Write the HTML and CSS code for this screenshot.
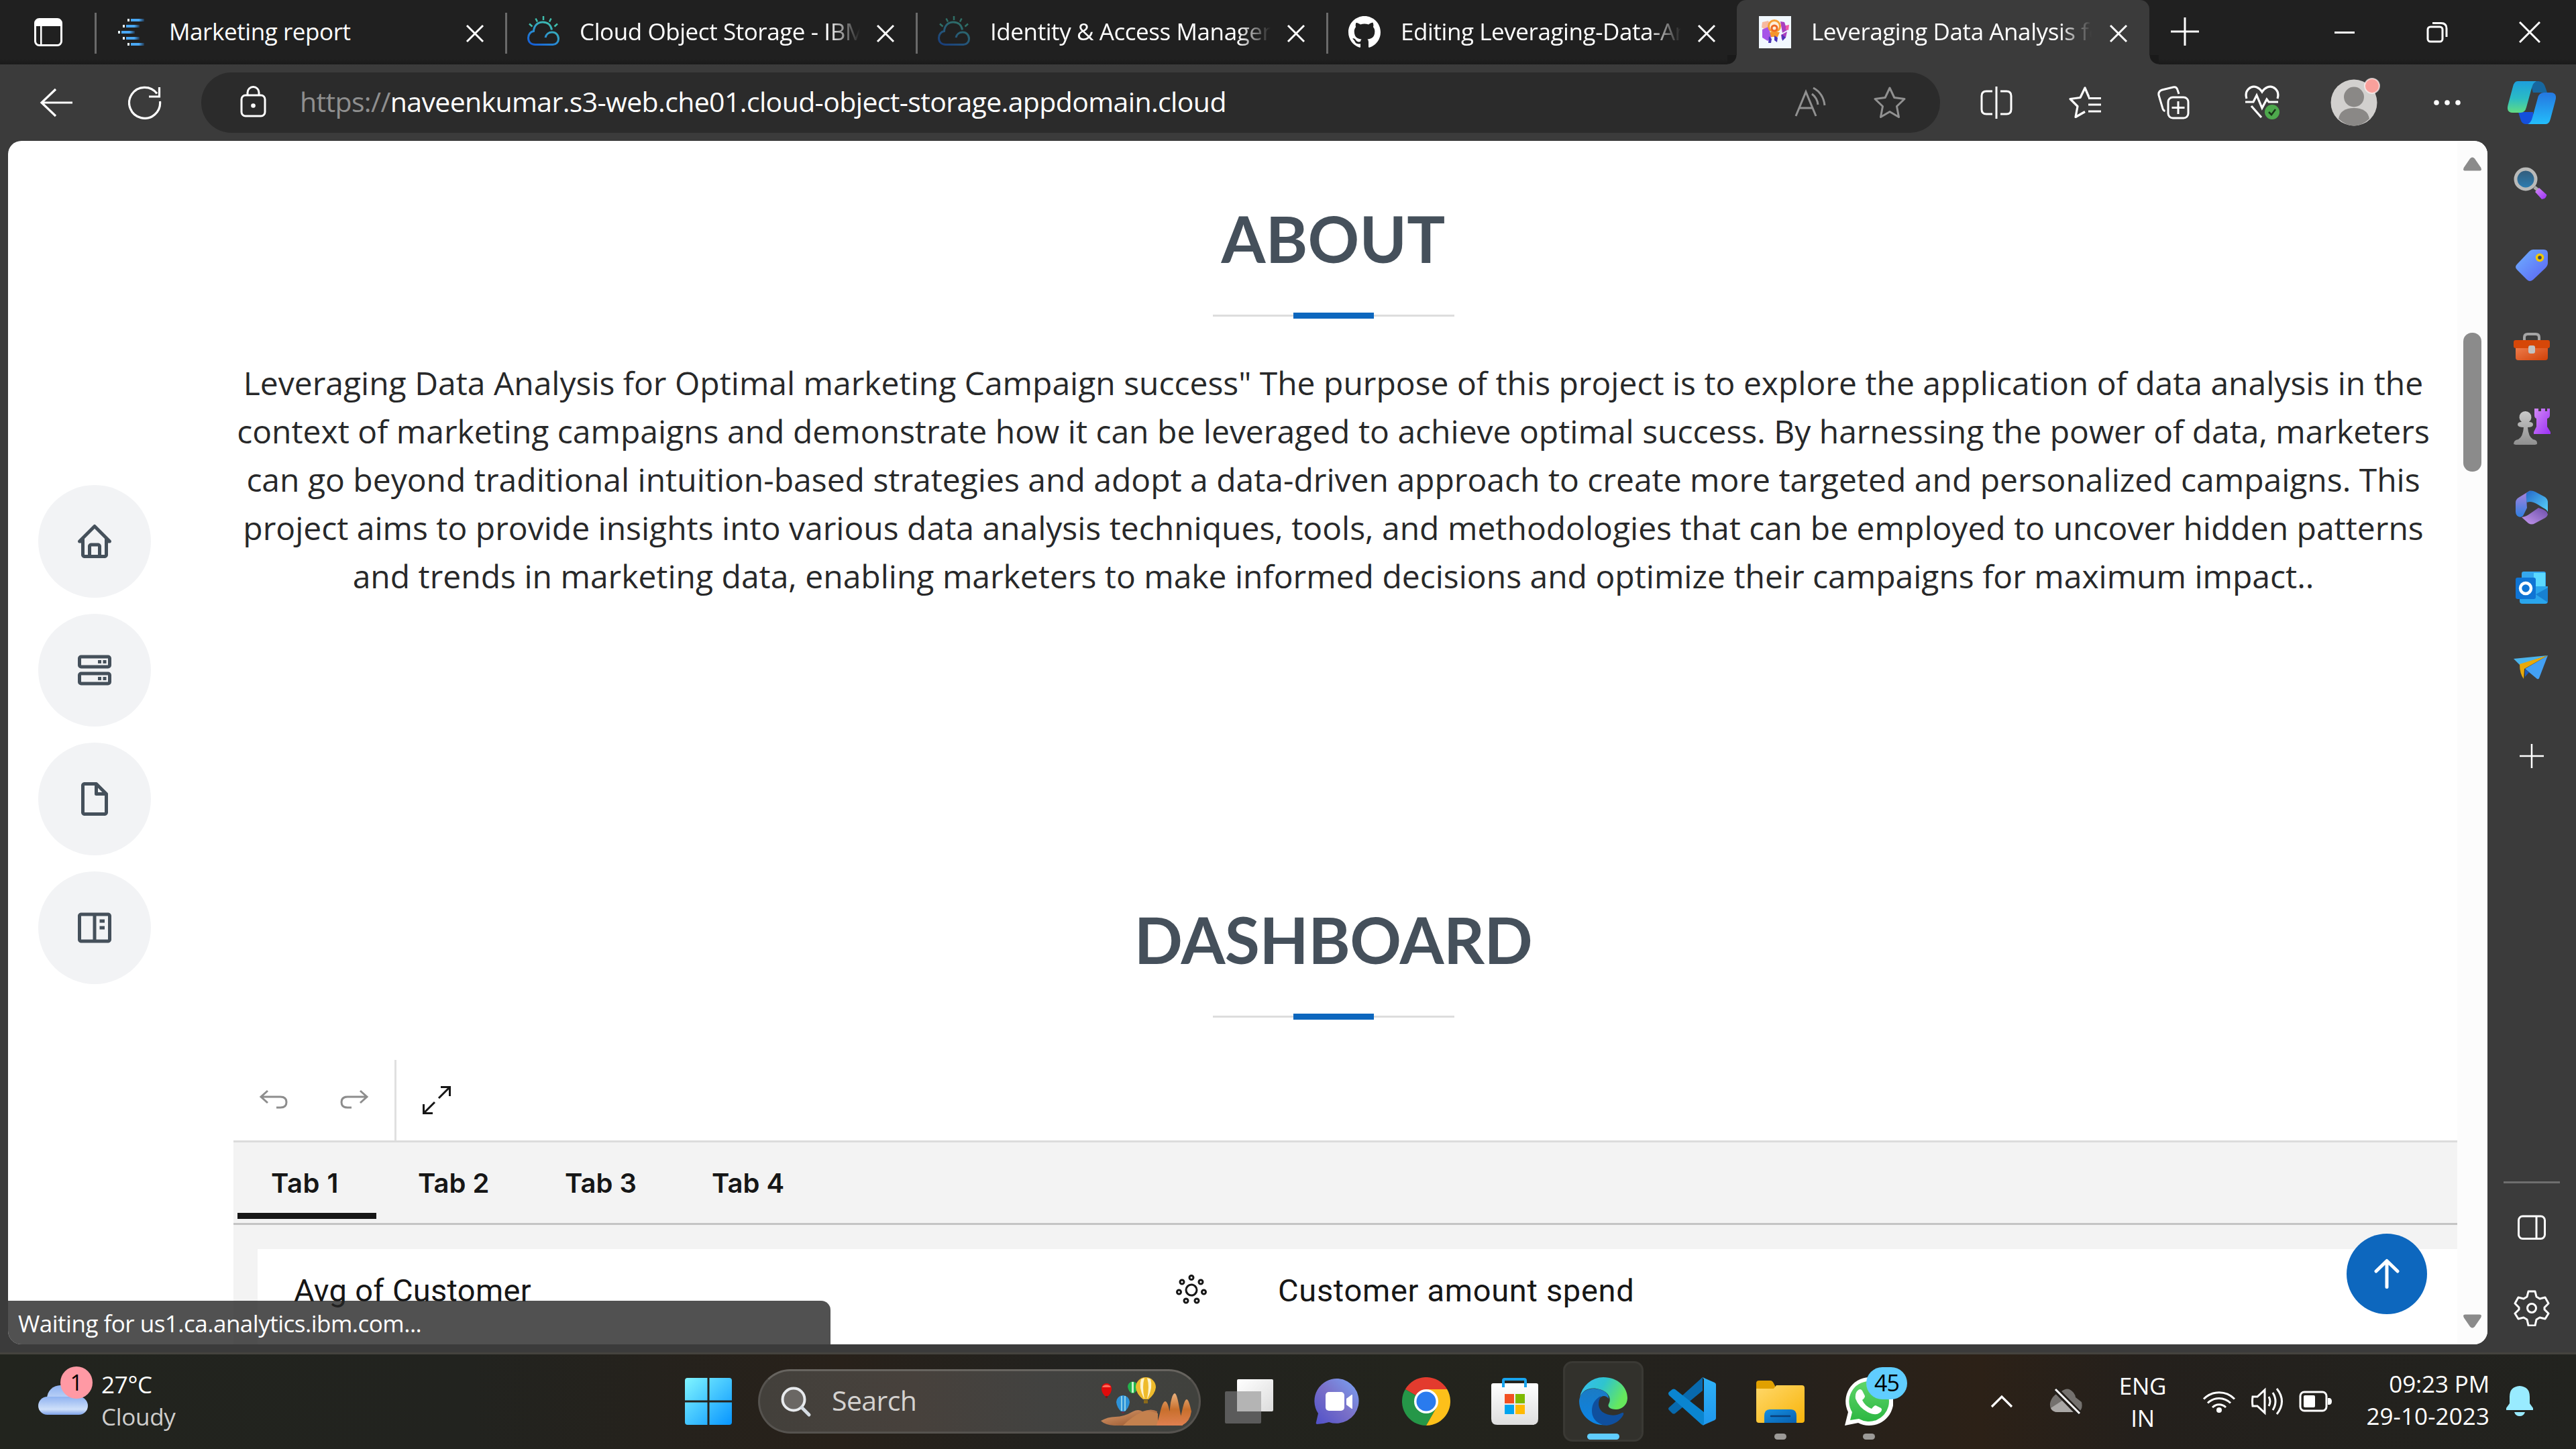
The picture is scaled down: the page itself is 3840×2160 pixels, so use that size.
FILE: index.html
```html
<!DOCTYPE html>
<html lang="en">
<head>
<meta charset="utf-8">
<title>Leveraging Data Analysis for Optimal Marketing Campaign</title>
<link rel="stylesheet" href="styles.css">
</head>
<body>
<svg class="defs" width="0" height="0" aria-hidden="true">
  <defs>
    <linearGradient id="gBar" x1="0" y1="0" x2="1" y2="0"><stop offset="0" stop-color="#4aa8f5"/><stop offset=".6" stop-color="#4aa8f5"/><stop offset="1" stop-color="#20344a"/></linearGradient>
    <linearGradient id="gCloud" x1="0" y1="1" x2=".7" y2="0"><stop offset="0" stop-color="#1258d8"/><stop offset=".5" stop-color="#2b8fd0"/><stop offset="1" stop-color="#3fbfae"/></linearGradient>
    <linearGradient id="gCopA" x1="0" y1="0" x2="0" y2="1"><stop offset="0" stop-color="#1d9fdd"/><stop offset=".55" stop-color="#2bbcc4"/><stop offset="1" stop-color="#61dc83"/></linearGradient>
    <linearGradient id="gCopB" x1="0" y1="0" x2="0" y2="1"><stop offset="0" stop-color="#2577e0"/><stop offset="1" stop-color="#23bdfb"/></linearGradient>
    <linearGradient id="gPurple" x1="0" y1="0" x2="1" y2="1"><stop offset="0" stop-color="#d38bf5"/><stop offset="1" stop-color="#9b30f5"/></linearGradient>
    <linearGradient id="gTag" x1="0" y1="0" x2="1" y2="1"><stop offset="0" stop-color="#6fb2ff"/><stop offset="1" stop-color="#5a62f4"/></linearGradient>
    <linearGradient id="gLens" x1="0" y1="0" x2="0" y2="1"><stop offset="0" stop-color="#335a78"/><stop offset="1" stop-color="#2c7fb4"/></linearGradient>
    <linearGradient id="gGrey" x1="0" y1="0" x2="0" y2="1"><stop offset="0" stop-color="#c9c9c9"/><stop offset="1" stop-color="#8f8f8f"/></linearGradient>
    <linearGradient id="gBox" x1="0" y1="0" x2="1" y2="1"><stop offset="0" stop-color="#f08050"/><stop offset="1" stop-color="#d04108"/></linearGradient>
    <linearGradient id="gM1" x1="0" y1="0" x2="0" y2="1"><stop offset="0" stop-color="#b182dc"/><stop offset="1" stop-color="#2f7fe0"/></linearGradient>
    <linearGradient id="gM2" x1="0" y1="0" x2="1" y2="1"><stop offset="0" stop-color="#2468c8"/><stop offset="1" stop-color="#58d3fb"/></linearGradient>
    <linearGradient id="gM3" x1="0" y1="1" x2="1" y2="0"><stop offset="0" stop-color="#c79af0"/><stop offset="1" stop-color="#6a4da8"/></linearGradient>
    <linearGradient id="gWin" x1="0" y1="0" x2="1" y2="1"><stop offset="0" stop-color="#80f5ff"/><stop offset="1" stop-color="#0795ff"/></linearGradient>
    <linearGradient id="gWeather" x1="0" y1="0" x2="0" y2="1"><stop offset="0" stop-color="#8fb2f0"/><stop offset=".7" stop-color="#cfe0fa"/><stop offset="1" stop-color="#7ca0e8"/></linearGradient>
    <linearGradient id="gTask" x1="0" y1="0" x2="1" y2="1"><stop offset="0" stop-color="#ffffff"/><stop offset="1" stop-color="#dcdcdc"/></linearGradient>
    <linearGradient id="gChat" x1="1" y1="0" x2="0" y2="1"><stop offset="0" stop-color="#79a4f5"/><stop offset=".5" stop-color="#7a70c8"/><stop offset="1" stop-color="#4f50c9"/></linearGradient>
    <linearGradient id="gStore" x1="0" y1="0" x2="0" y2="1"><stop offset="0" stop-color="#ffffff"/><stop offset="1" stop-color="#dedede"/></linearGradient>
    <linearGradient id="gEdgeTop" x1="0" y1="0" x2="1" y2=".4"><stop offset="0" stop-color="#36bdf2"/><stop offset=".5" stop-color="#2fc4cf"/><stop offset="1" stop-color="#66e85c"/></linearGradient>
    <linearGradient id="gEdgeLeft" x1="0" y1="0" x2="0" y2="1"><stop offset="0" stop-color="#1b7bc4"/><stop offset="1" stop-color="#0b84e6"/></linearGradient>
    <linearGradient id="gCode" x1="0" y1="0" x2="0" y2="1"><stop offset="0" stop-color="#2fb2f7"/><stop offset="1" stop-color="#1e97ee"/></linearGradient>
    <linearGradient id="gFolder" x1="0" y1="0" x2="1" y2="1"><stop offset="0" stop-color="#ffd86a"/><stop offset="1" stop-color="#f8b40a"/></linearGradient>
    <linearGradient id="gFolderBlue" x1="0" y1="0" x2="1" y2="1"><stop offset="0" stop-color="#1690e0"/><stop offset="1" stop-color="#075fb0"/></linearGradient>
    <linearGradient id="gWa" x1="0" y1="0" x2="0" y2="1"><stop offset="0" stop-color="#60d66a"/><stop offset="1" stop-color="#2cb742"/></linearGradient>
    <linearGradient id="gRock" x1="0" y1="0" x2="0" y2="1"><stop offset="0" stop-color="#eab27e"/><stop offset=".5" stop-color="#c86f2c"/><stop offset="1" stop-color="#e08050"/></linearGradient>
    <linearGradient id="gSand" x1="0" y1="0" x2="1" y2="1"><stop offset="0" stop-color="#e0a070"/><stop offset="1" stop-color="#8a4a24"/></linearGradient>
    <symbol id="x" viewBox="0 0 30 30"><path d="M3 3 27 27M27 3 3 27" fill="none" stroke="#fff" stroke-width="3"/></symbol>
    <symbol id="cos" viewBox="0 0 48 48">
      <path d="M12 42.500C5 42.500 1.500 38 1.500 32.500c0-6 4-9.500 8-10C10 13.500 16 9 23 9c8 0 12.500 5 13.500 11.500M12 42.500h26c5 0 8.500-4 8.500-8.500 0-6-4-10-9.500-10-5 0-9 3-10 8" fill="none" stroke="url(#gCloud)" stroke-width="3"/>
      <path d="M24 0v6M12.500 3.500l2.500 5M35.500 3.500l-2.500 5M3 11.500l4.500 4M45 11.500l-4.500 4" stroke="#3fbfae" stroke-width="2.500"/>
    </symbol>
  </defs>
</svg>

<div class="browser">
  <header class="tabstrip">
    <div class="workspace"><svg width="42" height="42" viewBox="0 0 42 42"><rect x="1.500" y="1.500" width="39" height="39" rx="6" fill="none" stroke="#fff" stroke-width="3"/><path d="M2 7q0-6 6-6h26q6 0 6 6v5H2zM9 12h2.500v28H9z" fill="#fff"/></svg></div>
    <div class="tab">
      <svg class="fav" width="48" height="48" viewBox="0 0 48 48"><g fill="url(#gBar)"><rect x="21" y="4" width="20" height="4"/><rect x="14" y="13" width="20" height="4"/><rect x="7" y="22" width="20" height="4"/><rect x="14" y="31" width="20" height="4"/><rect x="21" y="40" width="20" height="4"/></g><path d="M16 4h3v4h-3zM9 13h3v4H9zM2 22h3v4H2zM9 31h3v4H9zM16 40h3v4h-3z" fill="#e8f4fa"/></svg>
      <span class="label">Marketing report</span><svg class="close" width="30" height="30"><use href="#x"/></svg>
    </div>
    <div class="tab">
      <svg class="fav" width="48" height="48"><use href="#cos"/></svg>
      <span class="label fade">Cloud Object Storage - IBM Cloud</span><svg class="close" width="30" height="30"><use href="#x"/></svg>
    </div>
    <div class="tab">
      <svg class="fav dim" width="48" height="48"><use href="#cos"/></svg>
      <span class="label fade">Identity &amp; Access Management</span><svg class="close" width="30" height="30"><use href="#x"/></svg>
    </div>
    <div class="tab">
      <svg class="fav" width="48" height="48" viewBox="0 0 16 16"><path fill="#fff" d="M8 0C3.580 0 0 3.580 0 8c0 3.540 2.290 6.530 5.470 7.590.4.070.55-.17.55-.38 0-.19-.01-.82-.01-1.490-2.010.37-2.530-.49-2.690-.94-.09-.23-.48-.94-.82-1.130-.28-.15-.68-.52-.01-.53.63-.01 1.080.58 1.230.82.72 1.210 1.870.87 2.330.66.07-.52.28-.87.51-1.070-1.780-.2-3.640-.89-3.640-3.950 0-.87.31-1.590.82-2.150-.08-.2-.36-1.020.08-2.120 0 0 .67-.21 2.200.82.64-.18 1.320-.27 2-.27s1.360.09 2 .27c1.530-1.040 2.200-.82 2.200-.82.44 1.100.16 1.920.08 2.120.51.56.82 1.270.82 2.150 0 3.070-1.870 3.750-3.650 3.950.29.25.54.73.54 1.480 0 1.070-.01 1.930-.01 2.200 0 .21.15.46.55.38A8.010 8.010 0 0 0 16 8c0-4.420-3.580-8-8-8z"/></svg>
      <span class="label fade">Editing Leveraging-Data-Analysis</span><svg class="close" width="30" height="30"><use href="#x"/></svg>
    </div>
    <div class="tab active">
      <svg class="fav" width="48" height="48" viewBox="0 0 48 48"><rect width="48" height="48" fill="#f1f8fe"/><path d="M5 9l9-2 4 8-6 6-8-4z" fill="#f7b9a0"/><path d="M5 20l9-4 5 15-6 6-8-5z" fill="#a653e8"/><path d="M32 8l6 1 4 12-7 4zM33 28l9-5-2 9-6 3z" fill="#a93fc0"/><path d="M40 14l5-1-1 8-4-1z" fill="#ee5aa8"/><circle cx="23" cy="15" r="8.500" fill="#fdeed8" stroke="#f5a034" stroke-width="3"/><circle cx="23" cy="18" r="4" fill="none" stroke="#ee6a24" stroke-width="3"/><path d="M16 24l15 0-3 7H18z" fill="#f5952b"/><path d="M15 30l4 4-1 6h-4zM23 29l5 3-1 7-4-3zM34 27l6 5-5 5z" fill="#4a35b8"/></svg>
      <span class="label fade">Leveraging Data Analysis for Optimal</span><svg class="close" width="30" height="30"><use href="#x"/></svg>
    </div>
    <svg class="newtab" width="42" height="42" viewBox="0 0 42 42"><path d="M21 0v42M0 21h42" stroke="#fff" stroke-width="3"/></svg>
    <div class="winbtns">
      <svg width="32" height="32" viewBox="0 0 32 32"><path d="M1 16.500h30" stroke="#fff" stroke-width="3"/></svg>
      <svg width="32" height="32" viewBox="0 0 32 32"><g fill="none" stroke="#fff" stroke-width="3"><rect x="2" y="8" width="22" height="22" rx="4"/><path d="M9 2.500h13q8 0 8 8V23"/></g></svg>
      <svg width="32" height="32" viewBox="0 0 32 32"><path d="M1 1 31 31M31 1 1 31" stroke="#fff" stroke-width="3"/></svg>
    </div>
  </header>

  <div class="toolbar">
    <div class="navbtns">
      <svg width="50" height="48" viewBox="0 0 50 48"><path d="M24 4 3 24 24 44M3 24H49" fill="none" stroke="#fff" stroke-width="3.200"/></svg>
      <svg width="50" height="50" viewBox="0 0 50 50"><path d="M47.500 23A23 23 0 1 1 43 11.500M46.500 2v14H31" fill="none" stroke="#fff" stroke-width="3.200"/></svg>
    </div>
    <div class="address">
      <svg class="lock" width="40" height="48" viewBox="0 0 40 48"><rect x="2" y="14" width="35" height="31" rx="6" fill="none" stroke="#fff" stroke-width="3"/><path d="M11 14v-4a8.500 8.500 0 0 1 17 0v4" fill="none" stroke="#fff" stroke-width="3"/><circle cx="19.500" cy="29.500" r="3.300" fill="#fff"/></svg>
      <span class="url"><i>https://</i>naveenkumar.s3-web.che01.cloud-object-storage.appdomain.cloud</span>
      <svg class="read" width="48" height="48" viewBox="0 0 48 48"><g fill="none" stroke="#919191" stroke-width="3"><path d="M2 44 17 8 32 44M7 32h20M26 11q8 6 9 16M28 2q15 8 17 26"/></g></svg>
      <svg width="50" height="50" viewBox="0 0 50 50"><path d="M25 3l6.800 14.500L47 19.500 35.500 30.500l3 16L25 38.500l-13.500 8 3-16L3 19.500l15.200-2z" fill="none" stroke="#919191" stroke-width="3" stroke-linejoin="round"/></svg>
    </div>
    <div class="tools">
      <svg width="48" height="50" viewBox="0 0 48 50"><g fill="none" stroke="#fff" stroke-width="3"><path d="M18 8H9q-7 0-7 7v20q0 7 7 7h9M30 8h9q7 0 7 7v20q0 7-7 7h-9M24 1v48"/></g></svg>
      <svg width="50" height="50" viewBox="0 0 50 50"><path d="M31 17 25 3l-7 14.500L3 19.500l11 11-3 16L25 38.500M30 18.500h19M30 28h19M30 38h19" fill="none" stroke="#fff" stroke-width="3.200" stroke-linejoin="round"/></svg>
      <svg width="50" height="50" viewBox="0 0 50 50"><g fill="none" stroke="#fff" stroke-width="3"><rect x="17" y="17" width="30" height="31" rx="7"/><path d="M32 23v19M22.500 32.500h19M33 12l-2-6q-1.500-5-6.500-4L8 6Q2 8 3 14l6 20q1 3 3.500 3.500"/></g></svg>
      <svg width="54" height="54" viewBox="0 0 54 54"><path d="M4 21C0 8 11 1 19 4q5 2 8 7 3-5 8-7c8-3 19 4 15 17M2 26h12l5-10 8 19 7-13 3 4h14M11 32l15 17" fill="none" stroke="#fff" stroke-width="3.200"/><circle cx="42" cy="41" r="11" fill="#4ea94d"/><path d="M37 41l4 4 6-8" fill="none" stroke="#183518" stroke-width="2.500"/></svg>
      <svg class="avatar" width="78" height="78" viewBox="0 0 78 78"><circle cx="38" cy="42" r="34.500" fill="#d2d0ce"/><circle cx="38" cy="33.500" r="15" fill="#8a8886"/><path d="M15 66c2-11 10-16 23-16s21 5 23 16q-10 10-23 10.500Q25 76 15 66z" fill="#8a8886"/><circle cx="65" cy="17" r="11" fill="#f9a09b" stroke="#fff" stroke-opacity=".6" stroke-width="2"/></svg>
      <svg width="42" height="10" viewBox="0 0 42 10"><g fill="#fff"><circle cx="5" cy="5" r="3.800"/><circle cx="21" cy="5" r="3.800"/><circle cx="37" cy="5" r="3.800"/></g></svg>
      <svg class="copilot" width="72" height="66" viewBox="0 0 72 66"><path d="M33 1h13q8 0 11 11l2 6H38z" fill="#17679f"/><path d="M39 65H27q-6 0-8-8l-3-10h22z" fill="#1450dc"/><path d="M15 1h28q-5 2-7 10L28 40q-2 8-9 8H8q-11 0-7-13L8 9q2-8 7-8z" fill="url(#gCopA)"/><path d="M57 65H30q5-2 7-10l8-29q2-8 9-8h10q11 0 7 13l-7 26q-2 8-7 8z" fill="url(#gCopB)"/></svg>
    </div>
  </div>

  <div class="workarea">
    <div class="viewport">
      <nav class="sidenav">
        <a><svg width="60" height="60" viewBox="0 0 24 24"><path d="M3 13h1v7c0 1.103.897 2 2 2h12c1.103 0 2-.897 2-2v-7h1a1 1 0 0 0 .707-1.707l-9-9a.999.999 0 0 0-1.414 0l-9 9A1 1 0 0 0 3 13zm7 7v-5h4v5h-4zm2-15.586 6 6V15l.001 5H16v-5c0-1.103-.897-2-2-2h-4c-1.103 0-2 .897-2 2v5H6v-9.586l6-6z"/></svg></a>
        <a><svg width="60" height="60" viewBox="0 0 24 24"><path d="M20 3H4a2 2 0 0 0-2 2v4a2 2 0 0 0 2 2h16a2 2 0 0 0 2-2V5a2 2 0 0 0-2-2zM4 9V5h16v4zM20 13H4a2 2 0 0 0-2 2v4a2 2 0 0 0 2 2h16a2 2 0 0 0 2-2v-4a2 2 0 0 0-2-2zM4 19v-4h16v4zM17 6h2v2h-2zM14 6h2v2h-2zM17 16h2v2h-2zM14 16h2v2h-2z" fill-rule="evenodd"/></svg></a>
        <a><svg width="60" height="60" viewBox="0 0 24 24"><path d="M19.937 8.680c-.011-.032-.02-.063-.033-.094a.997.997 0 0 0-.196-.293l-6-6a.997.997 0 0 0-.293-.196c-.03-.014-.062-.022-.094-.033a.991.991 0 0 0-.259-.051C13.040 2.011 13.021 2 13 2H6c-1.103 0-2 .897-2 2v16c0 1.103.897 2 2 2h12c1.103 0 2-.897 2-2V9c0-.021-.011-.040-.013-.062a.990.990 0 0 0-.050-.258zM16.586 8H14V5.414L16.586 8zM6 20V4h6v5a1 1 0 0 0 1 1h5l.002 10H6z"/></svg></a>
        <a><svg width="60" height="60" viewBox="0 0 24 24"><path d="M20 3H4c-1.103 0-2 .897-2 2v14c0 1.103.897 2 2 2h16c1.103 0 2-.897 2-2V5c0-1.103-.897-2-2-2zM4 19V5h7v14H4zm9 0V5h7l.001 14H13z"/><path d="M15 7h3v2h-3zM15 11h3v2h-3z"/></svg></a>
      </nav>
      <main class="page">
        <section class="about">
          <h2>ABOUT</h2>
          <div class="rule"><span></span></div>
          <p>Leveraging Data Analysis for Optimal marketing Campaign success" The purpose of this project is to explore the application of data analysis in the context of marketing campaigns and demonstrate how it can be leveraged to achieve optimal success. By harnessing the power of data, marketers can go beyond traditional intuition-based strategies and adopt a data-driven approach to create more targeted and personalized campaigns. This project aims to provide insights into various data analysis techniques, tools, and methodologies that can be employed to uncover hidden patterns and trends in marketing data, enabling marketers to make informed decisions and optimize their campaigns for maximum impact..</p>
        </section>
        <section class="dash">
          <h2>DASHBOARD</h2>
          <div class="rule"><span></span></div>
          <div class="embed">
            <div class="actions">
              <div class="history">
                <svg width="48" height="48" viewBox="0 0 48 48"><path d="M14 9 4 18l10 9M4 18h29q9 0 9 8t-9 8h-6" fill="none" stroke="#8d8d8d" stroke-width="3"/></svg>
                <svg width="48" height="48" viewBox="0 0 48 48"><path d="M34 9l10 9-10 9M44 18H15q-9 0-9 8t9 8h6" fill="none" stroke="#8d8d8d" stroke-width="3"/></svg>
              </div>
              <svg class="expand" width="48" height="48" viewBox="0 0 48 48"><path d="M30 4.500h13.500V18M43.500 4.500 27 21M21 27 4.500 43.500M4.500 30v13.500H18" fill="none" stroke="#161616" stroke-width="3"/></svg>
            </div>
            <div class="tabs"><span class="on">Tab 1</span><span>Tab 2</span><span>Tab 3</span><span>Tab 4</span></div>
            <div class="canvas">
              <div class="cards">
                <h3 class="first">Avg of Customer</h3>
                <svg class="insight" width="48" height="48" viewBox="0 0 48 48"><g fill="none" stroke="#161616" stroke-width="3"><circle cx="24" cy="25" r="8"/><circle cx="24" cy="6.500" r="3"/><circle cx="10" cy="13" r="3"/><circle cx="38" cy="13" r="3"/><circle cx="5.500" cy="28" r="3"/><circle cx="42.500" cy="28" r="3"/><circle cx="16" cy="41" r="3"/><circle cx="32" cy="41" r="3"/></g></svg>
                <h3 class="second">Customer amount spend</h3>
              </div>
            </div>
          </div>
        </section>
      </main>
      <div class="scrollbar">
        <svg width="27" height="21" viewBox="0 0 27 21"><path d="M10 2.500q3.500-4 7 0l9 13q2.500 5-2 5H3q-4.500 0-2-5z" fill="#8b8b8b"/></svg>
        <i></i>
        <svg class="down" width="27" height="21" viewBox="0 0 27 21"><path d="M10 18.500q3.500 4 7 0l9-13q2.500-5-2-5H3q-4.500 0-2 5z" fill="#8b8b8b"/></svg>
      </div>
      <div class="totop"><svg width="48" height="48" viewBox="0 0 48 48"><path d="M24 43.500V6M8 20 24 4.500 40 20" fill="none" stroke="#fff" stroke-width="5" stroke-linecap="round" stroke-linejoin="round"/></svg></div>
      <div class="status">Waiting for us1.ca.analytics.ibm.com...</div>
    </div>

    <aside class="edgebar">
      <svg width="60" height="60" viewBox="0 0 60 60"><path d="M34 33l6 5" stroke="#aaa" stroke-width="5"/><path d="M41 34l11 10q1 2-3 6l-4 1-10-11z" fill="url(#gPurple)"/><circle cx="21" cy="21" r="15" fill="url(#gLens)" stroke="#b9bab9" stroke-width="5"/></svg>
      <svg width="60" height="60" viewBox="0 0 60 60"><path d="M32 6h16q6 0 6 6v14q0 4-4 8L32 51q-5 4-9 0L8 36q-4-4 0-8L26 9q3-3 6-3z" fill="url(#gTag)"/><circle cx="42" cy="18" r="4.500" fill="#3b4560" stroke="#f0c800" stroke-width="3.500"/></svg>
      <svg width="60" height="60" viewBox="0 0 60 60"><path d="M19 22v-5q0-5 5-5h12q5 0 5 5v5" fill="none" stroke="#a5a5a5" stroke-width="4"/><path d="M6 29h48v18q0 4-4 4H10q-4 0-4-4z" fill="url(#gBox)"/><rect x="3" y="21" width="54" height="12" rx="3" fill="#d64708"/><rect x="25" y="29" width="10" height="12" rx="3" fill="#c2c2c2"/></svg>
      <svg width="60" height="60" viewBox="0 0 60 60"><path d="M34 3h6v4h4V3h6v4h3V3h4v10q0 4-4 5v12l5 8v3H33v-3l4-8V18q-3-1-3-5z" fill="url(#gPurple)"/><path d="M3 56q0-6 7-7 7-4 8-18-9 0-9-4t6-4a9 9 0 1 1 11 0q6 0 6 4t-8 4q1 14 8 18 7 1 6 7l-3 1H6z" fill="url(#gGrey)"/></svg>
      <svg width="60" height="60" viewBox="0 0 60 60"><path d="M28 5q-7 8-5 26l-6 12q-3 3-7 1-4-2-4-8V23q0-4 4-7z" fill="url(#gM1)"/><path d="M22 9q6-6 13-2l15 8q4 3 4 8v14q-2-4-7-6l-8-5q-10-6-16-3-2-8-1-14z" fill="url(#gM2)"/><path d="M15 45q7-1 12-5l13-9q14 4 14 10-1 3-4 5L35 54q-5 3-10 0z" fill="url(#gM3)"/></svg>
      <svg width="60" height="60" viewBox="0 0 60 60"><rect x="15" y="6" width="36" height="25" rx="3" fill="#35a8ee"/><path d="M33 8h17v20H33z" fill="#5bd9ff"/><path d="M12 28h42v22q0 4-4 4H16q-4 0-4-4z" fill="#2aa5ec"/><path d="M36 40l18-10v22z" fill="#1781d2"/><rect x="6" y="15" width="30" height="32" rx="3" fill="#0f74d4"/><circle cx="21" cy="31" r="8" fill="none" stroke="#fff" stroke-width="4.500"/></svg>
      <svg width="60" height="60" viewBox="0 0 60 60"><path d="M3 16 54 11 12 25z" fill="#4bb4ec"/><path d="M54 11 20 31l18 15q2 1 3-1z" fill="#43a0f4"/><path d="M20 32l6 4-6 7z" fill="#1a5cc0"/><path d="M12 24 54 11 19 31l-1 15q-6-8-6-22z" fill="#e8a90a"/></svg>
      <svg class="plus" width="38" height="38" viewBox="0 0 38 38"><path d="M19 1v36M1 19h36" stroke="#fff" stroke-width="2.500"/></svg>
      <hr>
      <svg class="pane" width="42" height="38" viewBox="0 0 42 38"><rect x="1.500" y="2" width="39" height="33.500" rx="6" fill="none" stroke="#fff" stroke-width="3"/><path d="M28 2v34" stroke="#fff" stroke-width="3"/></svg>
      <svg class="gear" width="54" height="54" viewBox="0 0 54 54"><path d="M22 2h10l2 8 5 3 8-2 5 9-6 6v3l6 6-5 8-8-2-5 3-2 9H22l-2-9-5-3-8 2-5-8 6-6v-3l-6-6 5-9 8 2 5-3z" fill="none" stroke="#fff" stroke-width="3" stroke-linejoin="round"/><circle cx="27" cy="27" r="6.500" fill="none" stroke="#fff" stroke-width="3"/></svg>
    </aside>
  </div>
</div>

<footer class="taskbar">
  <div class="weather">
    <div class="cloud">
      <svg width="76" height="48" viewBox="0 0 76 48"><circle cx="33" cy="21" r="20" fill="url(#gWeather)"/><rect x="0" y="18" width="74" height="27" rx="13.500" fill="url(#gWeather)"/></svg>
      <b>1</b>
    </div>
    <div class="wtext"><span>27°C</span><span class="muted">Cloudy</span></div>
  </div>
  <div class="cell start"><svg width="70" height="70" viewBox="0 0 70 70"><path d="M4 0h29.500v33.500H0V4q0-4 4-4zM36.500 0H66q4 0 4 4v29.500H36.500zM0 36.500h33.500V70H4q-4 0-4-4zM36.500 36.500H70V66q0 4-4 4H36.500z" fill="url(#gWin)"/></svg></div>
  <div class="search">
    <svg width="48" height="48" viewBox="0 0 48 48"><circle cx="20" cy="21" r="16.500" fill="#6a6764" stroke="#e8ebee" stroke-width="4"/><path d="M32 33l11 11" stroke="#d5dce3" stroke-width="5" stroke-linecap="round"/></svg>
    <span>Search</span>
    <svg class="art" width="138" height="72" viewBox="0 0 138 72">
      <path d="M0 65q10-6 22-6 12 0 26-8 8-4 14 0 14-5 22 0v21H20Q6 71 0 65z" fill="url(#gSand)"/><path d="M33 72q14-14 28-20 10-4 24 2v18z" fill="#c4814e"/>
      <path d="M83 72l5-18q4-18 8-18t7 18l4 18zM100 72l4-34q3-14 6-14t6 16l6 32zM116 72l6-26q3-13 6-13t7 18q-2 15-14 21z" fill="url(#gRock)"/>
      <path d="M1 17a7.500 8 0 0 1 15 0q0 6-5 11H6q-5-5-5-11z" fill="#e00b0b"/><path d="M2 15a7 6 0 0 1 13 0z" fill="#ff6a5a"/><path d="M7 28h3v3H7z" fill="#7a1515"/>
      <path d="M40 14a7.500 7.500 0 0 1 15 0q-1 7-6 10h-3q-5-3-6-10z" fill="#23b24c"/><path d="M46 7h3v16h-3z" fill="#c8f2c8"/>
      <path d="M23 37a10 10 0 0 1 20 0q-1 8-7 14h-6q-6-6-7-14z" fill="#2d92d8"/><path d="M30 28h2v22h-2zM35 28h2v22h-2z" fill="#8fd0e8"/><path d="M31 51h4v3h-4z" fill="#6a3040"/>
      <path d="M52 15a15 15 0 0 1 30 0q-1 10-11 18h-8Q53 25 52 15z" fill="#eebb2c"/><path d="M60 3q-4 12 4 28l1 1q-4-18 0-31zM74 3q4 12-4 28l-1 1q4-18 0-31z" fill="#fdf3cc"/><path d="M64 34h6v5h-6z" fill="#8a6a1a"/>
    </svg>
  </div>
  <div class="cell"><svg width="72" height="72" viewBox="0 0 72 72"><rect x="18" y="3" width="54" height="48" rx="2" fill="url(#gTask)"/><rect x="0" y="21" width="54" height="48" rx="2" fill="#5f5f5f" fill-opacity=".95"/><path d="M18 21h36v30H18z" fill="#b4b4b4"/></svg></div>
  <div class="cell"><svg width="72" height="72" viewBox="0 0 72 72"><path d="M37 2a33.500 33.500 0 1 1-14 65q-9 3-18 3-2-1-1-3l3-13A33.500 33.500 0 0 1 37 2z" fill="url(#gChat)"/><rect x="18" y="22" width="28" height="28" rx="5" fill="#fff"/><path d="M49 32l8-6h1v21h-1l-8-6z" fill="#fff"/></svg></div>
  <div class="cell"><svg width="72" height="72" viewBox="0 0 72 72"><path d="M36 36 4.800 18A36 36 0 0 1 67.200 18z" fill="#e33b2e"/><path d="M36 36 4.800 18A36 36 0 0 0 36 72l15.500-27z" fill="#259748"/><path d="M36 18h31.200A36 36 0 0 1 36 72l15.500-27z" fill="#fdc01a"/><circle cx="36" cy="36" r="18" fill="#fff"/><circle cx="36" cy="36" r="14.500" fill="#2a7bee"/></svg></div>
  <div class="cell"><svg width="72" height="72" viewBox="0 0 72 72"><path d="M1 12q0-3 3-3h64q3 0 3 3v50q0 9-9 9H10q-9 0-9-9z" fill="url(#gStore)"/><path d="M19 15V5q0-2 2-2h29q2 0 2 2v10" fill="none" stroke="#18a4ee" stroke-width="4"/><path d="M21 25h14v14H21z" fill="#f25022"/><path d="M37 25h14v14H37z" fill="#7fba00"/><path d="M21 41h14v14H21z" fill="#00a4ef"/><path d="M37 41h14v14H37z" fill="#ffb900"/></svg></div>
  <div class="cell current"><svg width="72" height="72" viewBox="0 0 72 72"><path d="M1 30A36 36 0 0 1 36 0c22 0 36 15 36 31 0 10-8 17-17 17-9 0-13-4-11-8 5-8 0-20-18-23C14 15 5 20 1 30z" fill="url(#gEdgeTop)"/><path d="M0 36c1-14 12-19 22-19 14 1 22 6 22 15-4-5-10-6-15 1-5 7-4 20 3 28 3 4 8 8 13 9A36 36 0 0 1 0 36z" fill="url(#gEdgeLeft)"/><path d="M33 28c-6 8-5 19 2 24 9 6 20 6 29 1q3-1 2 3-8 14-25 16C28 71 19 62 19 50c0-11 6-19 14-22z" fill="#0f4f9e"/></svg><i></i></div>
  <div class="cell"><svg width="72" height="72" viewBox="0 0 72 72"><path d="M52 0v20L11 54q-2 1-4 0l-5-5q-2-2 0-4z" fill="#0869ad"/><path d="M2 22l5-4q2-1 4 0l43 34v19q-2 1-4-1L2 27q-2-3 0-5z" fill="#0a85d0"/><path d="M52 0l18 8q2 1 2 3v50q0 2-2 3l-18 8q1-1 2-3V3z" fill="url(#gCode)"/></svg></div>
  <div class="cell"><svg width="72" height="72" viewBox="0 0 72 72"><path d="M0 9q0-4 4-4h17q3 0 5 4l4 8H0z" fill="#e0a000"/><path d="M0 17h26l4-5h38q4 0 4 4v48q0 4-4 4H4q-4 0-4-4z" fill="url(#gFolder)"/><path d="M12 68V58q0-10 8-10h32q8 0 8 10v10z" fill="url(#gFolderBlue)"/><path d="M22 58h28" stroke="#0a3f78" stroke-width="2.500" stroke-linecap="round"/></svg><i class="dot"></i></div>
  <div class="cell"><svg width="72" height="72" viewBox="0 0 72 72"><path d="M36 0a36 36 0 1 1-16 68L0 72l5-20A36 36 0 0 1 36 0z" fill="#fff"/><path d="M36 6a30 30 0 1 1-15 56L8 64l3-12A30 30 0 0 1 36 6z" fill="url(#gWa)"/><path d="M19 20q4-4 7 0l4 8q0 3-4 6 4 9 14 13 4-5 6-5l8 4q3 3-2 7-6 5-18-1-13-7-18-20-1-8 3-12z" fill="#fff"/></svg><b class="badge">45</b><i class="dot"></i></div>
  <div class="tray">
    <svg width="34" height="20" viewBox="0 0 34 20"><path d="M2 18 17 3 32 18" fill="none" stroke="#fff" stroke-width="3.200"/></svg>
    <svg class="onedrive" width="50" height="42" viewBox="0 0 50 42"><path d="M18 6q10-8 18 2 3 4 3 7l9 7q3 14-8 15H12Q0 36 1 24 3 12 18 6z" fill="#74716e"/><path d="M2 31 22 18l24 18q-3 1-6 1H12Q5 37 2 31z" fill="#aaa8a6"/><path d="M9 3 45 40" stroke="#24201c" stroke-width="9"/><path d="M9 3 45 39" stroke="#fff" stroke-width="3"/></svg>
    <div class="lang"><span>ENG</span><span>IN</span></div>
    <svg class="wifi" width="50" height="36" viewBox="0 0 50 36"><g fill="none" stroke="#fff" stroke-width="3"><path d="M2 14.500a32 32 0 0 1 46 0M8 20.500a24 24 0 0 1 34 0M15 27a14 14 0 0 1 20 0"/></g><circle cx="25" cy="31" r="4" fill="#fff"/></svg>
    <svg class="vol" width="50" height="42" viewBox="0 0 50 42"><g fill="none" stroke="#fff" stroke-width="3"><path d="M3 14h7L21 4v34L10 28H3q-1-7 0-14zM27 14q4 7 0 14M33 8q8 13 0 26M39 2q15 19 0 38"/></g></svg>
    <svg class="bat" width="50" height="32" viewBox="0 0 50 32"><rect x="2" y="2" width="39" height="28" rx="6" fill="none" stroke="#fff" stroke-width="3"/><rect x="7" y="7" width="17" height="18" rx="2" fill="#fff"/><path d="M43 11h3q3 1 3 5t-3 5h-3z" fill="#fff"/></svg>
    <div class="clock"><span>09:23 PM</span><span class="date">29-10-2023</span></div>
    <svg class="bell" width="40" height="46" viewBox="0 0 40 46"><path d="M20 0q15 1 15 16v10l5 7v3H0v-3l5-7V16Q5 1 20 0zM12 39h16q-2 6-8 6t-8-6z" fill="#99ebff"/></svg>
  </div>
</footer>
</body>
</html>
```
FILE: styles.css
```css
* { box-sizing: border-box; }
body {
  margin: 0;
  width: 3840px;
  height: 2160px;
  overflow: hidden;
  background: #3b3b3b;
  font-family: "Open Sans", "Noto Sans", sans-serif;
  color: #fff;
}
svg { display: block; flex: none; }
.defs { position: absolute; }
h2, h3, p { margin: 0; }
.browser { height: 2016px; display: flex; flex-direction: column; }

/* tab strip */
.tabstrip { height: 96px; background: linear-gradient(#202020 88px, #1a1a1a); display: flex; align-items: center; }
.workspace { width: 141px; padding-left: 51px; }
.tab {
  width: 612px; height: 96px;
  display: flex; align-items: center;
  padding: 0 30px 0 33px;
  position: relative;
}
.tab::before { content: ""; position: absolute; left: 0; top: 19px; width: 3px; height: 61px; background: #6a6a6a; }
.fav { margin-right: 30px; }
.fav.dim { opacity: .5; }
.label {
  width: 420px; height: 96px; line-height: 93px;
  overflow: hidden; white-space: nowrap;
  font-size: 35px; letter-spacing: -.42px;
}
.fade { -webkit-mask-image: linear-gradient(90deg, #000 370px, transparent 418px); mask-image: linear-gradient(90deg, #000 370px, transparent 418px); }
.close { margin-left: 23px; margin-top: 3px; }
.tab.active { width: 615px; background: #3b3b3b; border-radius: 14px 14px 0 0; }
.tab.active::before { left: -14px; top: auto; bottom: 0; width: 14px; height: 14px; background: radial-gradient(circle at 0 0, #1a1a1a 13px, #3b3b3b 14px); }
.tab.active::after { content: ""; position: absolute; right: -14px; bottom: 0; width: 14px; height: 14px; background: radial-gradient(circle at 100% 0, #1a1a1a 13px, #3b3b3b 14px); }
.newtab { margin-left: 32px; margin-right: 201px; margin-bottom: 3px; }
.winbtns { display: flex; gap: 106px; }

/* address row */
.toolbar { height: 114px; display: flex; align-items: center; }
.navbtns { width: 300px; padding-left: 59px; display: flex; align-items: center; gap: 82px; }
.address {
  width: 2592px; height: 90px; border-radius: 45px; background: #2b2b2b;
  display: flex; align-items: center; padding-left: 58px;
}
.lock { margin-right: 49px; margin-bottom: 2px; }
.url { width: 2228px; line-height: 86px; height: 90px; font-size: 41px; letter-spacing: -.63px; white-space: nowrap; }
.url i { font-style: normal; color: #8f8f8f; }
.read { margin-right: 69px; }
.tools { display: grid; grid-template-columns: 132px 132px 132px 132px 144px 132px 120px; margin-left: 18px; align-items: center; justify-items: center; }
.avatar { margin-top: -7px; }

/* page viewport */
.workarea { display: flex; height: 1806px; }
.viewport {
  margin-left: 12px; width: 3696px; height: 1794px;
  background: #fff; border-radius: 20px; overflow: hidden;
  display: grid; grid-template-columns: 300px 3351px 45px;
  position: relative;
}
.sidenav { padding: 513px 0 0 45px; display: flex; flex-direction: column; gap: 24px; }
.sidenav a { width: 168px; height: 168px; border-radius: 50%; background: #f2f3f5; display: grid; place-items: center; fill: #45505b; }
.page { overflow: hidden; height: 1794px; padding-left: 36px; }
.about { padding-top: 87px; padding-right: 36px; }
h2 { font: 700 95px/117px Lato, sans-serif; height: 115px; color: #45505b; text-align: center; }
.about h2 { letter-spacing: .2px; }
.rule { width: 360px; height: 9px; margin: 54px auto 0; background: linear-gradient(#ddd, #ddd) 0 3px / 100% 3px no-repeat; }
.rule span { display: block; width: 120px; height: 9px; margin: 0 auto; background: #0d67be; }
.about p { margin-top: 60px; font-size: 48px; line-height: 72px; text-align: center; color: #272829; }
.dash { padding-top: 447px; }
.dash h2 { letter-spacing: -.5px; }
.dash h2, .dash .rule { position: relative; left: -18px; }
.embed { margin-top: 60px; color: #161616; font-family: Roboto, sans-serif; }
.actions { height: 120px; display: flex; align-items: center; }
.history { width: 243px; height: 120px; border-right: 3px solid #e0e0e0; display: flex; align-items: center; gap: 70px; padding: 2px 0 0 37px; }
.expand { margin-left: 36px; }
.tabs { height: 126px; border-top: 3px solid #dcdcdc; border-bottom: 3px solid #c4c4c4; background: #f3f3f3; display: flex; gap: 12px; padding-left: 6px; }
.tabs span { width: 207px; height: 114px; padding-left: 50px; font: 600 40px/122px Inter, sans-serif; }
.tabs .on { border-bottom: 9px solid #161616; letter-spacing: .5px; }
.canvas { background: #f3f3f3; padding: 36px 0 0 36px; height: 300px; }
.cards { background: #fff; height: 264px; display: flex; padding: 33px 0 0 54px; }
h3 { font: 400 47px/57px Roboto, sans-serif; white-space: nowrap; }
.first { width: 1314px; letter-spacing: .3px; }
.second { margin-left: 105px; letter-spacing: .7px; }
.insight { margin-top: 3px; }
.scrollbar { background: #fcfcfc; padding: 24px 9px; height: 1794px; display: flex; flex-direction: column; }
.scrollbar i { height: 207px; margin-top: 241px; border-radius: 13px; background: #8b8b8b; }
.scrollbar .down { margin-top: auto; }
.totop { position: absolute; left: 3486px; top: 1629px; width: 120px; height: 120px; border-radius: 50%; background: #0d67be; display: grid; place-items: center; }
.status {
  position: absolute; left: 0; bottom: 0; width: 1226px; height: 65px; padding-left: 15px;
  border-radius: 0 14px 0 0; background: rgba(37, 37, 37, .8);
  font-size: 35px; line-height: 67px; letter-spacing: -.5px; white-space: nowrap;
}

/* right rail */
.edgebar { width: 132px; padding-top: 36px; display: flex; flex-direction: column; align-items: center; gap: 60px; }
.edgebar .plus { margin-top: 22px; }
.edgebar hr { width: 84px; height: 3px; border: 0; margin: 555px 0 0; background: #6e6e6e; }
.edgebar .pane { margin-top: -13px; }
.edgebar .gear { margin-top: 14px; }

/* taskbar */
.taskbar {
  height: 144px; border-top: 3px solid #45433e; display: flex; align-items: center;
  background: linear-gradient(90deg, #22241e 0, #22231f 700px, #28211a 1250px, #22221f 1600px, #23241d 2100px, #24211d 2600px, #2c2117 2950px, #24201c 3200px, #22231f 3840px);
}
.taskbar span { letter-spacing: -.3px; }
.weather { width: 990px; padding-left: 57px; display: flex; align-items: center; }
.cloud { width: 76px; position: relative; margin-top: -4px; }
.cloud b { position: absolute; left: 33px; top: -27px; width: 48px; height: 48px; border-radius: 50%; background: #ff99a4; color: #000; font: 400 33px/47px "Open Sans", sans-serif; text-align: center; }
.wtext { margin-left: 18px; display: flex; flex-direction: column; font-size: 35px; line-height: 48px; margin-top: -4px; }
.muted { color: #cfcecc; }
.cell { width: 132px; height: 120px; display: grid; place-items: center; position: relative; top: -1px; }
.cell.start { margin-right: 8px; }
.search {
  width: 660px; height: 96px; margin: -2px 6px 0 0; border-radius: 48px;
  border: 3px solid #56534f; border-top-color: #67645f;
  background: linear-gradient(90deg, #43403b, #47413c 35%, #424240 65%, #40413d);
  display: flex; align-items: center; padding-left: 30px; color: #d4d2d0; font-size: 41px;
}
.search span { margin-left: 29px; width: 401px; line-height: 82px; height: 86px; letter-spacing: -.6px; }
.current { width: 120px; margin: 0 6px; background: #32312c; border: 3px solid #3a3934; border-radius: 14px; }
.cell i { position: absolute; bottom: 0; left: 33px; width: 48px; height: 9px; border-radius: 5px; background: #60cdff; }
.cell i.dot { left: 57px; bottom: 3px; width: 18px; background: #9c9a97; }
.badge { position: absolute; left: 62px; top: 9px; width: 61px; height: 48px; border-radius: 24px; background: #60cdff; color: #000; font: 400 34px/46px "Open Sans", sans-serif; letter-spacing: -1px; text-align: center; }
.tray { display: flex; align-items: center; margin-left: 115px; }
.tray svg { margin-top: -2px; }
.tray .onedrive { margin-left: 54px; }
.lang, .clock { display: flex; flex-direction: column; font-size: 35px; line-height: 48px; margin-top: 0; }
.lang { width: 72px; align-items: center; margin-left: 53px; }
.tray .wifi { margin-left: 53px; }
.tray .vol { margin-left: 22px; }
.tray .bat { margin-left: 22px; }
.clock { width: 192px; align-items: flex-end; margin-left: 42px; margin-top: -5px; }
.taskbar .clock span { letter-spacing: -.15px; }
.taskbar .clock .date { letter-spacing: .1px; }
.tray .bell { margin-left: 25px; }
```
